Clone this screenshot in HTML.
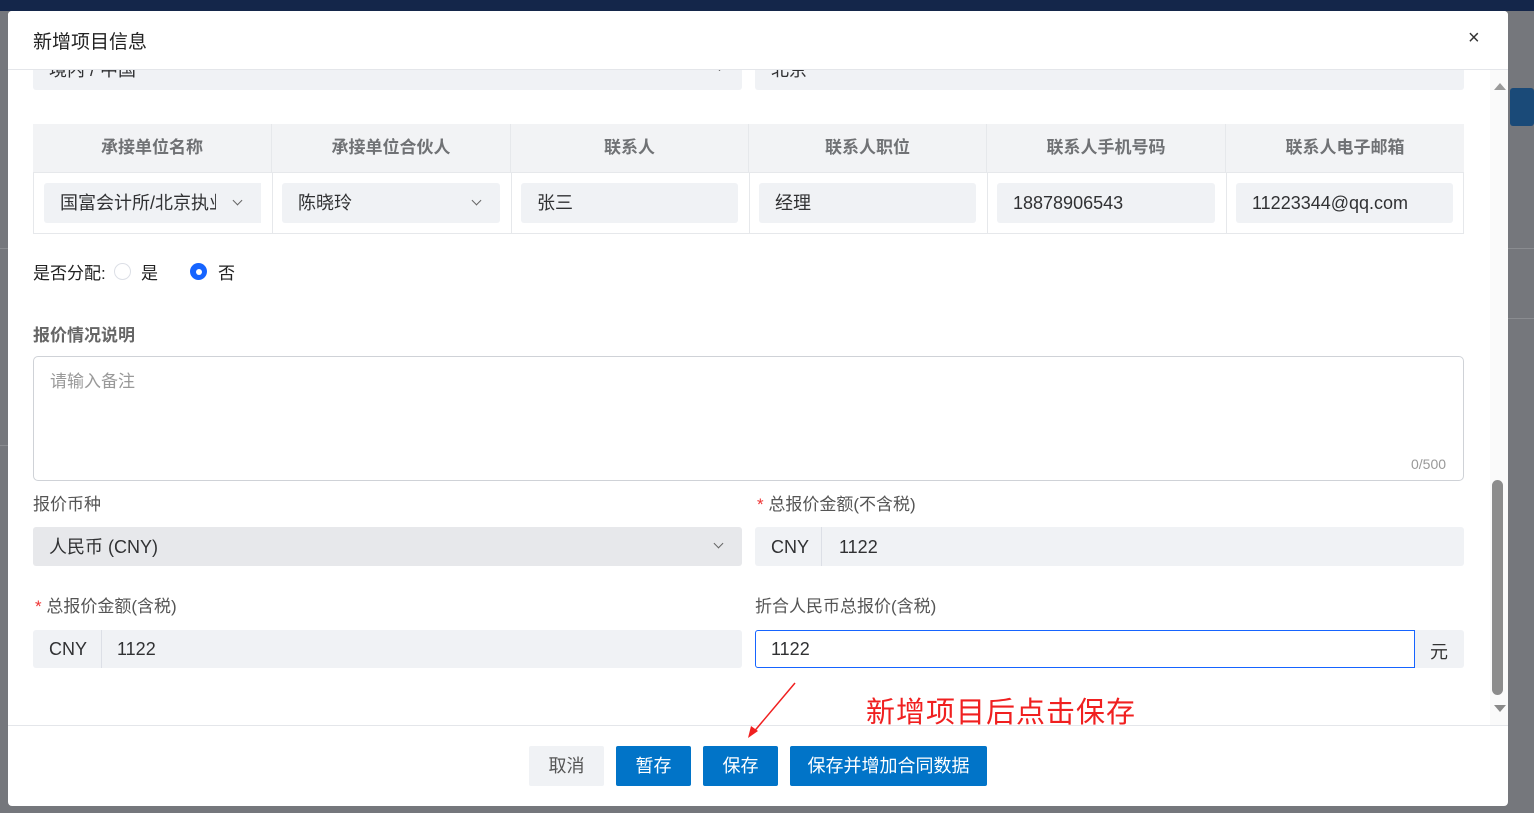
<!DOCTYPE html>
<html><head><meta charset="utf-8"><style>
*{box-sizing:border-box;margin:0;padding:0}
body{width:1534px;height:813px;overflow:hidden;position:relative;background:#75777c;font-family:"Liberation Sans","Noto Sans CJK SC",sans-serif;color:#303133}
.a{position:absolute}
.topbar{left:0;top:0;width:1534px;height:11px;background:#14264a}
.modal{left:8px;top:11px;width:1500px;height:795px;background:#fff;border-radius:4px;overflow:hidden}
.in{position:absolute;background:#f0f2f5;border-radius:3px;font-size:18px;line-height:40px;padding-left:16px;color:#303133}
.th{position:absolute;top:113px;height:49px;line-height:47px;text-align:center;font-weight:bold;font-size:17px;color:#707275;border-right:1px solid #e6e8eb}
.lbl{position:absolute;font-size:17px;color:#555}
.btn{position:absolute;top:735px;height:40px;line-height:40px;text-align:center;font-size:18px;color:#fff;background:#0174c8;border-radius:2px}
.chev{position:absolute;width:7px;height:7px;border-right:1.5px solid #666;border-bottom:1.5px solid #666;transform:rotate(45deg)}
</style></head><body>
<div class="a topbar"></div>
<div class="a" style="left:0;top:248px;width:8px;height:1px;background:#8a8c90"></div>
<div class="a" style="left:0;top:445px;width:8px;height:1px;background:#8a8c90"></div>
<div class="a" style="left:1508px;top:248px;width:26px;height:1px;background:#8a8c90"></div>
<div class="a" style="left:1508px;top:318px;width:26px;height:1px;background:#8a8c90"></div>
<div class="a" style="left:1510px;top:88px;width:24px;height:38px;background:#1a4a78;border-radius:3px"></div>
<div class="a modal">
  <div class="in" style="left:25px;top:40px;width:709px;height:39px;line-height:38px">境内 / 中国<div class="chev" style="right:20px;top:14px;width:5px;height:5px"></div></div>
  <div class="in" style="left:747px;top:40px;width:709px;height:39px;line-height:38px">北京</div>
  <div class="a" style="left:0;top:0;width:1500px;height:59px;background:#fff;border-bottom:1px solid #e4e6ea"></div>
  <div class="a" style="left:25px;top:16px;font-size:19px;color:#222">新增项目信息</div>
  <div class="a" style="left:1460px;top:16px;font-size:20px;color:#333">×</div>
  <div class="a" style="left:25px;top:113px;width:1431px;height:110px;border:1px solid #e6e8eb"></div>
  <div class="a" style="left:25px;top:113px;width:1431px;height:49px;background:#f2f3f5;border-bottom:1px solid #e6e8eb"></div>
  <div class="th" style="left:25px;width:239px">承接单位名称</div>
  <div class="th" style="left:264px;width:239px">承接单位合伙人</div>
  <div class="th" style="left:503px;width:238px">联系人</div>
  <div class="th" style="left:741px;width:238px">联系人职位</div>
  <div class="th" style="left:979px;width:239px">联系人手机号码</div>
  <div class="th" style="left:1218px;width:238px;border-right:none">联系人电子邮箱</div>
  <div class="a" style="left:264px;top:162px;width:1px;height:61px;background:#e6e8eb"></div>
  <div class="a" style="left:503px;top:162px;width:1px;height:61px;background:#e6e8eb"></div>
  <div class="a" style="left:741px;top:162px;width:1px;height:61px;background:#e6e8eb"></div>
  <div class="a" style="left:979px;top:162px;width:1px;height:61px;background:#e6e8eb"></div>
  <div class="a" style="left:1218px;top:162px;width:1px;height:61px;background:#e6e8eb"></div>
  <div class="in" style="left:36px;top:172px;width:217px;height:40px">国富会计所/北京执业<div class="a" style="right:0;top:0;width:45px;height:40px;background:#f0f2f5"></div><div class="chev" style="right:20px;top:14px"></div></div>
  <div class="in" style="left:274px;top:172px;width:218px;height:40px">陈晓玲<div class="chev" style="right:20px;top:14px"></div></div>
  <div class="in" style="left:513px;top:172px;width:217px;height:40px">张三</div>
  <div class="in" style="left:751px;top:172px;width:217px;height:40px">经理</div>
  <div class="in" style="left:989px;top:172px;width:218px;height:40px">18878906543</div>
  <div class="in" style="left:1228px;top:172px;width:217px;height:40px">11223344@qq.com</div>
  <div class="a" style="left:25px;top:248px;font-size:17px;color:#222">是否分配:</div>
  <div class="a" style="left:106px;top:252px;width:17px;height:17px;border:1px solid #dcdfe6;border-radius:50%"></div>
  <div class="a" style="left:133px;top:248px;font-size:17px;color:#222">是</div>
  <div class="a" style="left:182px;top:252px;width:17px;height:17px;background:#1664ff;border-radius:50%"><div class="a" style="left:5.5px;top:5.5px;width:6px;height:6px;background:#fff;border-radius:50%"></div></div>
  <div class="a" style="left:210px;top:248px;font-size:17px;color:#222">否</div>
  <div class="a" style="left:25px;top:310px;font-size:17px;font-weight:bold;color:#666">报价情况说明</div>
  <div class="a" style="left:25px;top:345px;width:1431px;height:125px;border:1px solid #cfd2d7;border-radius:5px"></div>
  <div class="a" style="left:42px;top:356px;font-size:17px;color:#999">请输入备注</div>
  <div class="a" style="left:1403px;top:445px;font-size:14px;color:#999">0/500</div>
  <div class="lbl" style="left:25px;top:479px">报价币种</div>
  <div class="in" style="left:25px;top:516px;width:709px;height:39px;background:#e7e8eb;line-height:40px">人民币 (CNY)<div class="chev" style="right:20px;top:13px"></div></div>
  <div class="lbl" style="left:749px;top:479px"><span style="color:#e33">*</span> 总报价金额(不含税)</div>
  <div class="in" style="left:747px;top:516px;width:709px;height:39px;line-height:40px">CNY<span style="position:absolute;left:66px;top:0;width:1px;height:39px;background:#dcdfe6"></span><span style="position:absolute;left:84px">1122</span></div>
  <div class="lbl" style="left:27px;top:581px"><span style="color:#e33">*</span> 总报价金额(含税)</div>
  <div class="in" style="left:25px;top:619px;width:709px;height:38px;line-height:38px">CNY<span style="position:absolute;left:68px;top:0;width:1px;height:38px;background:#dcdfe6"></span><span style="position:absolute;left:84px">1122</span></div>
  <div class="lbl" style="left:747px;top:581px">折合人民币总报价(含税)</div>
  <div class="in" style="left:747px;top:619px;width:709px;height:38px"></div>
  <div class="a" style="left:747px;top:619px;width:660px;height:38px;border:1px solid #1664ff;border-radius:3px 0 0 3px;background:#fff;font-size:18px;line-height:36px;padding-left:15px">1122</div>
  <div class="a" style="left:1422px;top:627px;font-size:18px;color:#333">元</div>
  <div class="a" style="left:1482px;top:59px;width:18px;height:655px;background:#fafafa"></div>
  <div class="a" style="left:1486px;top:72px;width:0;height:0;border-left:6px solid transparent;border-right:6px solid transparent;border-bottom:7px solid #9a9a9a"></div>
  <div class="a" style="left:1484px;top:469px;width:11px;height:215px;background:#8c8c8c;border-radius:6px"></div>
  <div class="a" style="left:1486px;top:694px;width:0;height:0;border-left:6px solid transparent;border-right:6px solid transparent;border-top:7px solid #8a8a8a"></div>
  <div class="a" style="left:0;top:714px;width:1500px;height:1px;background:#e4e6ea"></div>
  <div class="a" style="left:858px;top:678px;font-size:29px;color:#f02020;letter-spacing:1px">新增项目后点击保存</div>
  <svg class="a" style="left:730px;top:665px" width="60" height="65"><line x1="57" y1="7" x2="14" y2="58" stroke="#f02020" stroke-width="1.5"/><polygon points="10,62 13,50 20,55" fill="#f02020"/></svg>
  <div class="btn" style="left:521px;width:75px;background:#f0f2f5;color:#555">取消</div>
  <div class="btn" style="left:608px;width:75px">暂存</div>
  <div class="btn" style="left:695px;width:75px">保存</div>
  <div class="btn" style="left:782px;width:197px">保存并增加合同数据</div>
</div>
</body></html>
